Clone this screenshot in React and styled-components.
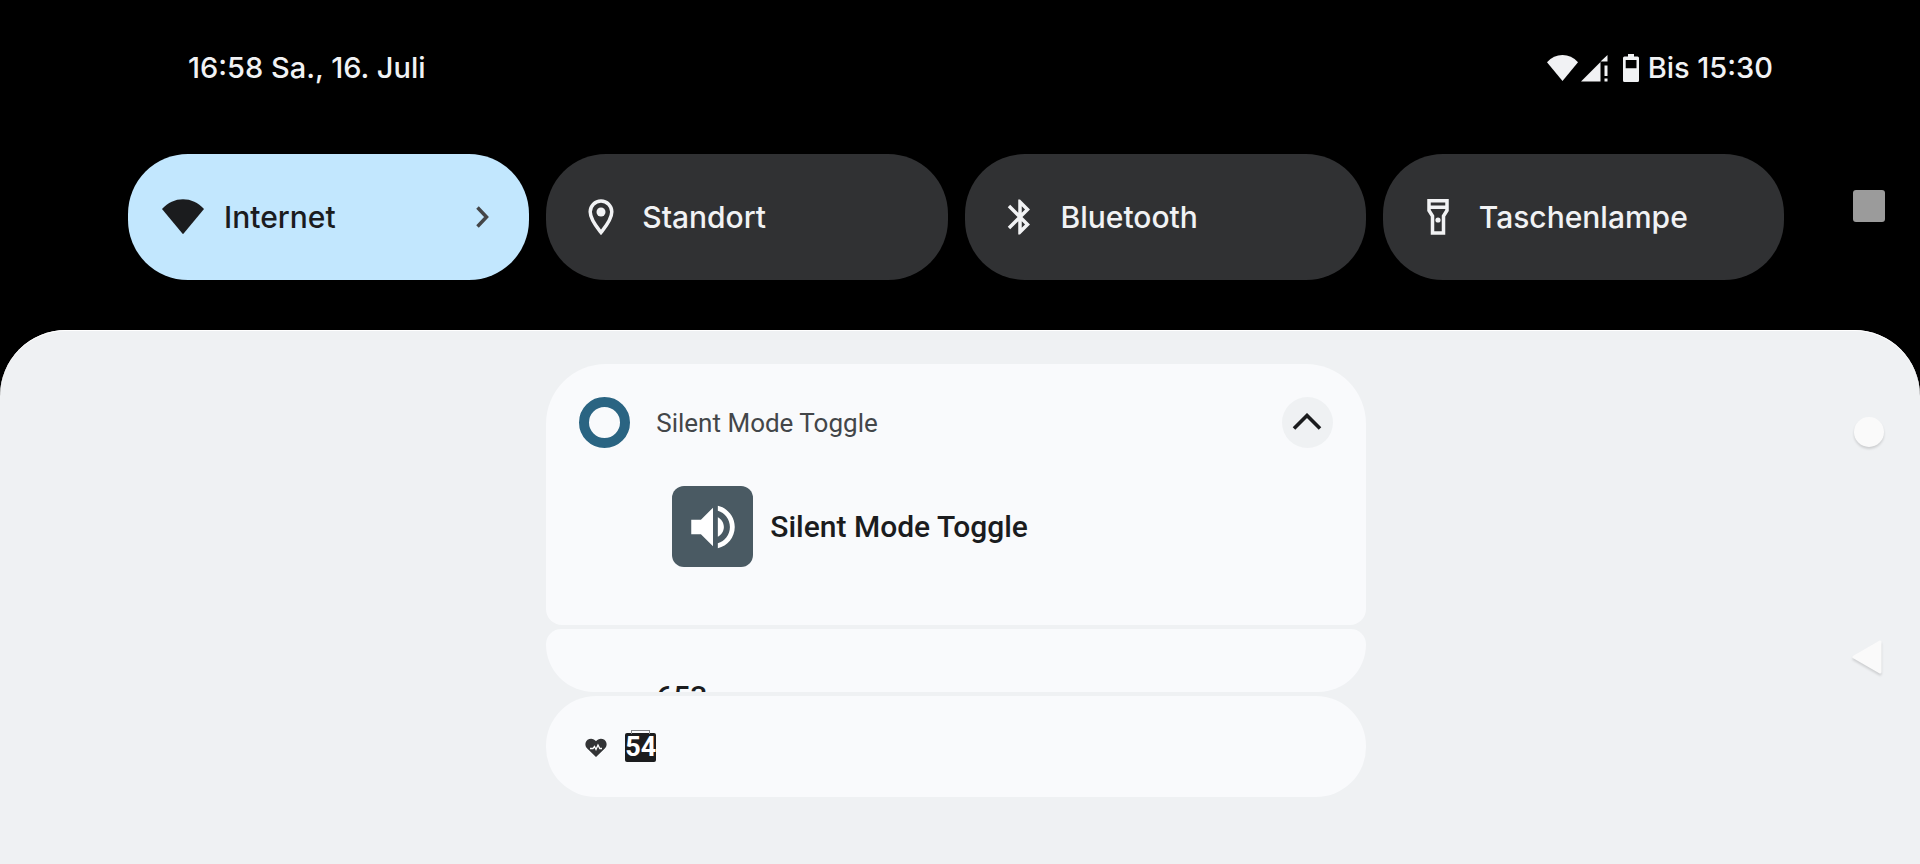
import React, { useState } from "react";
import styled, { createGlobalStyle } from "styled-components";

const GlobalStyle = createGlobalStyle`
  * {
    box-sizing: border-box;
  }

  body {
    margin: 0;
    background: #000;
    font-family: Roboto, "Liberation Sans", sans-serif;
  }

  button {
    border: none;
    background: none;
    padding: 0;
    font: inherit;
    color: inherit;
    cursor: pointer;
  }
`;

const WifiIcon = ({ size }) => (
  <svg width={size} height={size * 0.84} viewBox="0 0 42 35" fill="currentColor" aria-hidden="true">
    <path d="M21 35L0 9.800C6 3.300 13 0 21 0s15 3.300 21 9.800z" />
  </svg>
);

const SignalIcon = () => (
  <svg width="27" height="27" viewBox="0 0 27 27" fill="currentColor" aria-hidden="true">
    <path d="M0 26.500L19.500 7v19.500zM19.500 6.500L26.500 0v6.500z" />
    <path d="M23.500 10.500h3v10.500h-3zM23.500 23.500h3v3h-3z" />
  </svg>
);

const BatteryIcon = () => (
  <svg width="16" height="28" viewBox="0 0 16 28" fill="currentColor" aria-hidden="true">
    <path
      fillRule="evenodd"
      d="M5 0h6v2.500h3.500a1.500 1.500 0 0 1 1.500 1.500v22.500a1.500 1.500 0 0 1-1.500 1.500h-13a1.500 1.500 0 0 1-1.500-1.500V4a1.500 1.500 0 0 1 1.500-1.500H5zM2.700 6v8.300h10.800V6z"
    />
  </svg>
);

const PinIcon = () => (
  <svg width="42" height="42" viewBox="0 0 42 42" aria-hidden="true">
    <path
      d="M21 36.500C17.500 32 10.200 23.600 10.200 15.800a10.800 10.800 0 0 1 21.600 0C31.800 23.600 24.500 32 21 36.500z"
      fill="none"
      stroke="currentColor"
      strokeWidth="3.500"
    />
    <circle cx="21" cy="16" r="4.500" fill="currentColor" />
  </svg>
);

const BluetoothIcon = () => (
  <svg width="42" height="42" viewBox="0 0 24 24" fill="currentColor" aria-hidden="true">
    <path d="M17.710 7.710L12 2h-1v7.590L6.410 5 5 6.410 10.590 12 5 17.590 6.410 19 11 14.410V22h1l5.710-5.710-4.300-4.290 4.300-4.290zM13 5.830l1.880 1.880L13 9.590V5.830zm1.880 10.460L13 18.170v-3.760l1.880 1.880z" />
  </svg>
);

const TorchIcon = () => (
  <svg width="42" height="42" viewBox="0 0 42 42" aria-hidden="true">
    <path
      d="M12 4.800h18v9.700l-3.500 5.500v17h-11V20L12 14.500zM12 11.300h18"
      fill="none"
      stroke="currentColor"
      strokeWidth="3.500"
    />
    <circle cx="21" cy="24" r="2.600" fill="currentColor" />
  </svg>
);

const VolumeIcon = () => (
  <svg width="58" height="58" viewBox="0 0 24 24" fill="#fff" aria-hidden="true">
    <path d="M3 9v6h4l5 5V4L7 9H3zm13.500 3c0-1.770-1.020-3.290-2.500-4.030v8.050c1.480-.73 2.500-2.250 2.500-4.020zM14 3.230v2.060c2.890.86 5 3.540 5 6.710s-2.110 5.850-5 6.710v2.060c4.010-.91 7-4.490 7-8.770s-2.990-7.860-7-8.770z" />
  </svg>
);

const HeartIcon = () => (
  <svg width="22" height="20" viewBox="0 0 22 20" aria-hidden="true">
    <path
      d="M11 19L2.200 10.600C-.7 7.700.2 3.600 2.600 1.800 5.200-.1 9 .4 11 3.200c2-2.800 5.800-3.300 8.400-1.400 2.400 1.800 3.300 5.900.4 8.800z"
      fill="#333436"
    />
    <path d="M5 10.500h3L9.500 8.500l1.500 3L13 7l1.800 3.500H17" fill="none" stroke="#fff" strokeWidth="1.300" />
  </svg>
);

const tiles = [
  { label: "Internet", icon: <WifiIcon size={42} />, on: true, more: true },
  { label: "Standort", icon: <PinIcon /> },
  { label: "Bluetooth", icon: <BluetoothIcon /> },
  { label: "Taschenlampe", icon: <TorchIcon /> },
];

const App = () => {
  const [active, setActive] = useState(tiles.map((tile) => !!tile.on));

  const toggle = (index) => {
    setActive(active.map((on, i) => (i === index ? !on : on)));
  };

  return (
    <Screen>
      <GlobalStyle />
      <StatusBar>
        <span>16:58 Sa., 16. Juli</span>
        <StatusIcons>
          <WifiIcon size={31} />
          <SignalIcon />
          <BatteryWrap>
            <BatteryIcon />
          </BatteryWrap>
          <span>Bis 15:30</span>
        </StatusIcons>
      </StatusBar>

      <QuickTiles>
        {tiles.map((tile, index) => (
          <Tile key={tile.label} type="button" $on={active[index]} aria-pressed={active[index]} onClick={() => toggle(index)}>
            <TileIcon>{tile.icon}</TileIcon>
            <TileLabel>{tile.label}</TileLabel>
            {tile.more && (
              <svg width="13" height="22" viewBox="0 0 13 22" fill="none" stroke="#444648" strokeWidth="3.500" aria-hidden="true">
                <path d="M1.500 1.500L10.500 11l-9 9.500" />
              </svg>
            )}
          </Tile>
        ))}
      </QuickTiles>

      <Shade>
        <Notifications>
          <Card $radius="60px 60px 16px 16px">
            <CardHeader>
              <AppRing />
              <AppName>Silent Mode Toggle</AppName>
              <CollapseButton type="button" aria-label="Minimieren">
                <svg width="30" height="20" viewBox="0 0 30 20" fill="none" stroke="#1b1c1e" strokeWidth="3.600" aria-hidden="true">
                  <path d="M2 15.500L15 2.500l13 13" />
                </svg>
              </CollapseButton>
            </CardHeader>
            <CardBody>
              <AppImage>
                <VolumeIcon />
              </AppImage>
              <CardTitle>Silent Mode Toggle</CardTitle>
            </CardBody>
          </Card>

          <PeekCard $radius="16px 16px 50px 50px">
            <CardTitle>653</CardTitle>
          </PeekCard>

          <MiniCard $radius="50px">
            <HeartIcon />
            <Counter>54</Counter>
          </MiniCard>
        </Notifications>
      </Shade>

      <NavBar aria-label="Navigation">
        <NavButton type="button" aria-label="Letzte Apps">
          <svg width="32" height="32" aria-hidden="true">
            <rect width="32" height="32" rx="3" fill="#9b9b9b" />
          </svg>
        </NavButton>
        <NavButton type="button" aria-label="Startbildschirm" $shadow>
          <svg width="32" height="32" aria-hidden="true">
            <circle cx="16" cy="16" r="15" fill="#fafafa" />
          </svg>
        </NavButton>
        <NavButton type="button" aria-label="Zurück" $shadow>
          <svg width="36" height="36" viewBox="0 0 36 36" fill="#fafafa" stroke="#fafafa" strokeWidth="3" strokeLinejoin="round" aria-hidden="true">
            <path d="M3 17L29 2v30z" />
          </svg>
        </NavButton>
      </NavBar>
    </Screen>
  );
};

const Screen = styled.div`
  min-height: 100vh;
  display: flex;
  flex-direction: column;
  background: #000;
`;

const StatusBar = styled.header`
  display: flex;
  align-items: center;
  justify-content: space-between;
  padding: 48px 147px 0 188px;
  color: #f1f2f4;
  font-family: Inter, Roboto, sans-serif;
  font-size: 29px;
  font-weight: 500;
  line-height: 40px;
`;

const StatusIcons = styled.div`
  display: flex;
  align-items: center;
  gap: 3px;
`;

const BatteryWrap = styled.span`
  display: flex;
  padding: 0 6px 0 12px;
`;

const QuickTiles = styled.section`
  display: grid;
  grid-template-columns: repeat(4, 1fr);
  column-gap: 17px;
  padding: 66px 136px 50px 128px;
`;

const Tile = styled.button`
  display: flex;
  align-items: center;
  gap: 20px;
  height: 126px;
  padding: 0 40px 0 34px;
  border-radius: 60px;
  background: ${({ $on }) => ($on ? "#c2e7fe" : "#303133")};
  color: ${({ $on }) => ($on ? "#1b1c1e" : "#f1f2f4")};
  text-align: left;
`;

const TileIcon = styled.span`
  display: flex;
  align-items: center;
  justify-content: center;
  width: 42px;
  flex-shrink: 0;
`;

const TileLabel = styled.span`
  flex: 1;
  font-family: Inter, Roboto, sans-serif;
  font-size: 30px;
  font-weight: 500;
  line-height: 40px;
`;

const Shade = styled.main`
  flex: 1;
  display: grid;
  grid-template-columns: repeat(4, 1fr);
  column-gap: 17px;
  align-items: start;
  padding: 34px 136px 60px 128px;
  border-radius: 66px 66px 0 0;
  background: #eff1f3;
  box-shadow: inset 0 1px 0 #fff;
`;

const Notifications = styled.section`
  grid-column: 2 / 4;
  display: flex;
  flex-direction: column;
  gap: 4px;
`;

const Card = styled.article`
  border-radius: ${({ $radius }) => $radius};
  background: #f9fafc;
  overflow: hidden;
  padding: 33px 33px 58px;
`;

const CardHeader = styled.header`
  display: flex;
  align-items: center;
  gap: 26px;
`;

const AppRing = styled.span`
  width: 51px;
  height: 51px;
  border: 10px solid #2a6482;
  border-radius: 50%;
`;

const AppName = styled.span`
  flex: 1;
  color: #434649;
  font-size: 26px;
  line-height: 40px;
`;

const CollapseButton = styled.button`
  display: flex;
  align-items: center;
  justify-content: center;
  width: 51px;
  height: 51px;
  border-radius: 50%;
  background: #eff1f3;
`;

const CardBody = styled.div`
  display: flex;
  align-items: center;
  gap: 17px;
  padding: 38px 0 0 93px;
`;

const AppImage = styled.span`
  display: flex;
  align-items: center;
  justify-content: center;
  width: 81px;
  height: 81px;
  border-radius: 12px;
  background: #4a5a63;
`;

const CardTitle = styled.h2`
  margin: 0;
  color: #1b1c1e;
  font-size: 30px;
  font-weight: 500;
  line-height: 40px;
`;

/* next notification, cut off by the edge of the stack */
const PeekCard = styled(Card)`
  height: 63px;
  padding: 48px 33px 0 110px;
`;

const MiniCard = styled(Card)`
  display: flex;
  align-items: center;
  gap: 18px;
  height: 101px;
  padding: 2px 39px 0;
`;

const Counter = styled.span`
  display: flex;
  justify-content: center;
  width: 31px;
  border-radius: 2px;
  background: #1b1c1e;
  color: #fff;
  font-size: 27px;
  font-weight: 700;
  line-height: 29px;
  position: relative;

  &::before {
    content: "";
    position: absolute;
    left: 6px;
    right: 6px;
    top: -3px;
    height: 3px;
    border: 1px solid #85878a;
    border-bottom: none;
  }
`;

/* system navigation floats above the shade */
const NavBar = styled.nav`
  position: fixed;
  top: 0;
  right: 0;
  bottom: 0;
  width: 102px;
  display: flex;
  flex-direction: column;
  justify-content: center;
`;

const NavButton = styled.button`
  display: flex;
  align-items: center;
  justify-content: center;
  flex: 0 1 226px;

  svg {
    filter: ${({ $shadow }) => ($shadow ? "drop-shadow(0 2px 1px rgba(0, 0, 0, 0.14))" : "none")};
    overflow: visible;
  }
`;

export default App;
